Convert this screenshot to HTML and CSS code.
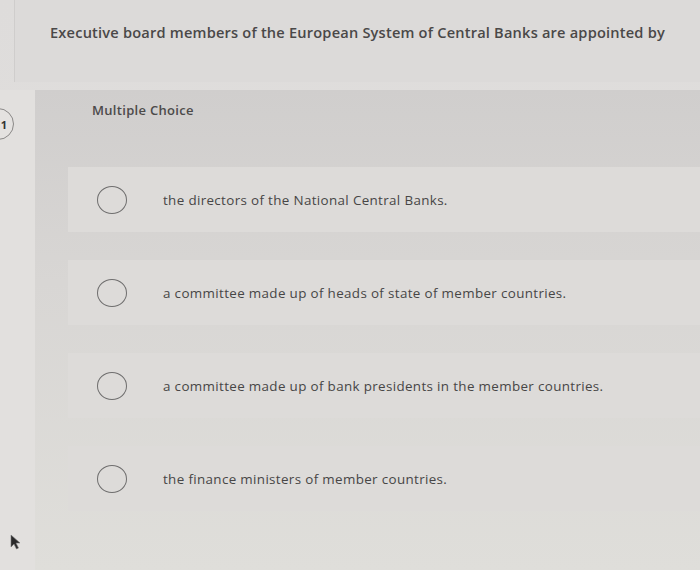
FILE: index.html
```html
<!DOCTYPE html>
<html>
<head>
<meta charset="utf-8">
<link rel="stylesheet" href="styles.css">
</head>
<body>
<div class="page">
  <div class="question-card">
    <p class="question-text">Executive board members of the European System of Central Banks are appointed by</p>
  </div>
  <div class="main">
    <div class="gutter">
      <div class="number-badge">1</div>
      <svg class="cursor" width="12" height="16" viewBox="0 0 12 16"><path d="M1 1 L1 13 L4 10 L6.5 15 L8.5 14 L6 9 L10 9 Z" fill="#2a2a2a" stroke="#777" stroke-width="0.6"/></svg>
    </div>
    <div class="choice-section">
      <div class="choice-label">Multiple Choice</div>
      <div class="options">
        <div class="option"><span class="radio"></span><span class="option-text">the directors of the National Central Banks.</span></div>
        <div class="option"><span class="radio"></span><span class="option-text">a committee made up of heads of state of member countries.</span></div>
        <div class="option"><span class="radio"></span><span class="option-text">a committee made up of bank presidents in the member countries.</span></div>
        <div class="option"><span class="radio"></span><span class="option-text">the finance ministers of member countries.</span></div>
      </div>
    </div>
  </div>
</div>
</body>
</html>
```
FILE: styles.css
```css
html, body {
  margin: 0;
  padding: 0;
}
body {
  width: 700px;
  height: 570px;
  overflow: hidden;
  background: linear-gradient(180deg, #dedcdb 0%, #e1dfdd 60%, #e6e5e1 100%);
  font-family: "Open Sans", "Liberation Sans", sans-serif;
  color: #474747;
}
.page {
  display: flex;
  flex-direction: column;
  gap: 8px;
}
.question-card {
  margin-left: 14px;
  height: 82px;
  border-left: 1px solid #cfcdcc;
  background: #dcdad9;
  padding: 22px 0 0 35px;
  box-sizing: border-box;
}
.question-text {
  margin: 0;
  font-size: 14.6px;
  font-weight: 600;
  color: #4a4848;
  letter-spacing: 0.2px;
  white-space: nowrap;
}
.main {
  display: grid;
  grid-template-columns: 35px 1fr;
  height: 480px;
}
.gutter {
  display: flex;
  flex-direction: column;
  justify-content: space-between;
  padding: 18px 0 20px;
  background: #e2e0de;
}
.number-badge {
  width: 32px;
  height: 32px;
  margin-left: -18px;
  border: 1.5px solid #8a8887;
  border-radius: 50%;
  box-sizing: border-box;
  display: flex;
  align-items: center;
  justify-content: flex-end;
  padding-right: 6px;
  font-size: 11px;
  font-weight: 700;
  color: #333;
  background: #e4e2e0;
}
.cursor {
  margin-left: 10px;
}
.choice-section {
  background: linear-gradient(180deg, #d0cecd 0%, #d8d6d4 40%, #dfdeda 100%);
  padding: 11px 0 0 0;
  display: flex;
  flex-direction: column;
}
.choice-label {
  margin-left: 57px;
  font-size: 13px;
  font-weight: 600;
  letter-spacing: 0.3px;
  color: #4c4a4a;
  height: 66px;
}
.options {
  margin-left: 33px;
  display: flex;
  flex-direction: column;
  gap: 28px;
}
.option {
  height: 65px;
  background: #dddbd9;
  display: flex;
  align-items: center;
  padding-left: 29px;
}
.radio {
  width: 30px;
  height: 28px;
  border: 1.5px solid #6f6e6e;
  border-radius: 50%;
  box-sizing: border-box;
  flex: none;
}
.option-text {
  margin-left: 36px;
  font-size: 13.4px;
  font-weight: 400;
  letter-spacing: 0.35px;
  color: #474646;
}
```
